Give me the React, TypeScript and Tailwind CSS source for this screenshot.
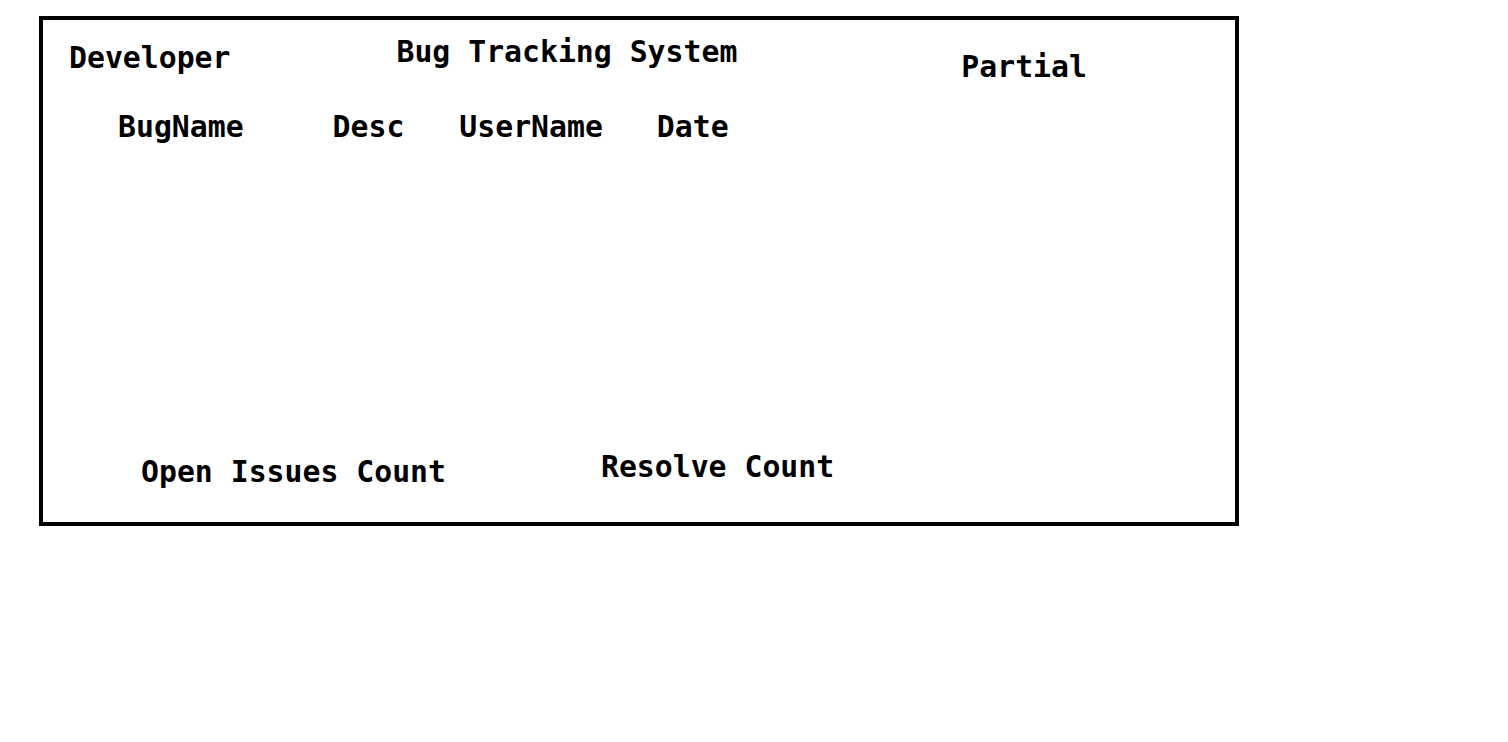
export default function App() {
  return (
    <div className="min-h-screen bg-white pl-[39px] pt-[16px] font-['DejaVu_Sans_Mono',monospace] text-[29.8px] font-bold leading-[30px] text-black">
      <div className="flex h-[510px] w-[1200px] flex-col border-4 border-black">
        {/* title row */}
        <div className="flex items-start">
          <span className="ml-[26px] mt-[23px]">Developer</span>
          <span className="ml-[166px] mt-[17px]">Bug Tracking System</span>
          <span className="ml-[224px] mt-[32px]">Partial</span>
        </div>

        {/* table headers */}
        <div className="mt-[30px] flex">
          <span className="ml-[75px]">BugName</span>
          <span className="ml-[89px]">Desc</span>
          <span className="ml-[55px]">UserName</span>
          <span className="ml-[54px]">Date</span>
        </div>

        {/* counts */}
        <div className="mt-[310px] flex items-start">
          <span className="ml-[98px] mt-[5px]">Open Issues Count</span>
          <span className="ml-[155px]">Resolve Count</span>
        </div>
      </div>
    </div>
  );
}
